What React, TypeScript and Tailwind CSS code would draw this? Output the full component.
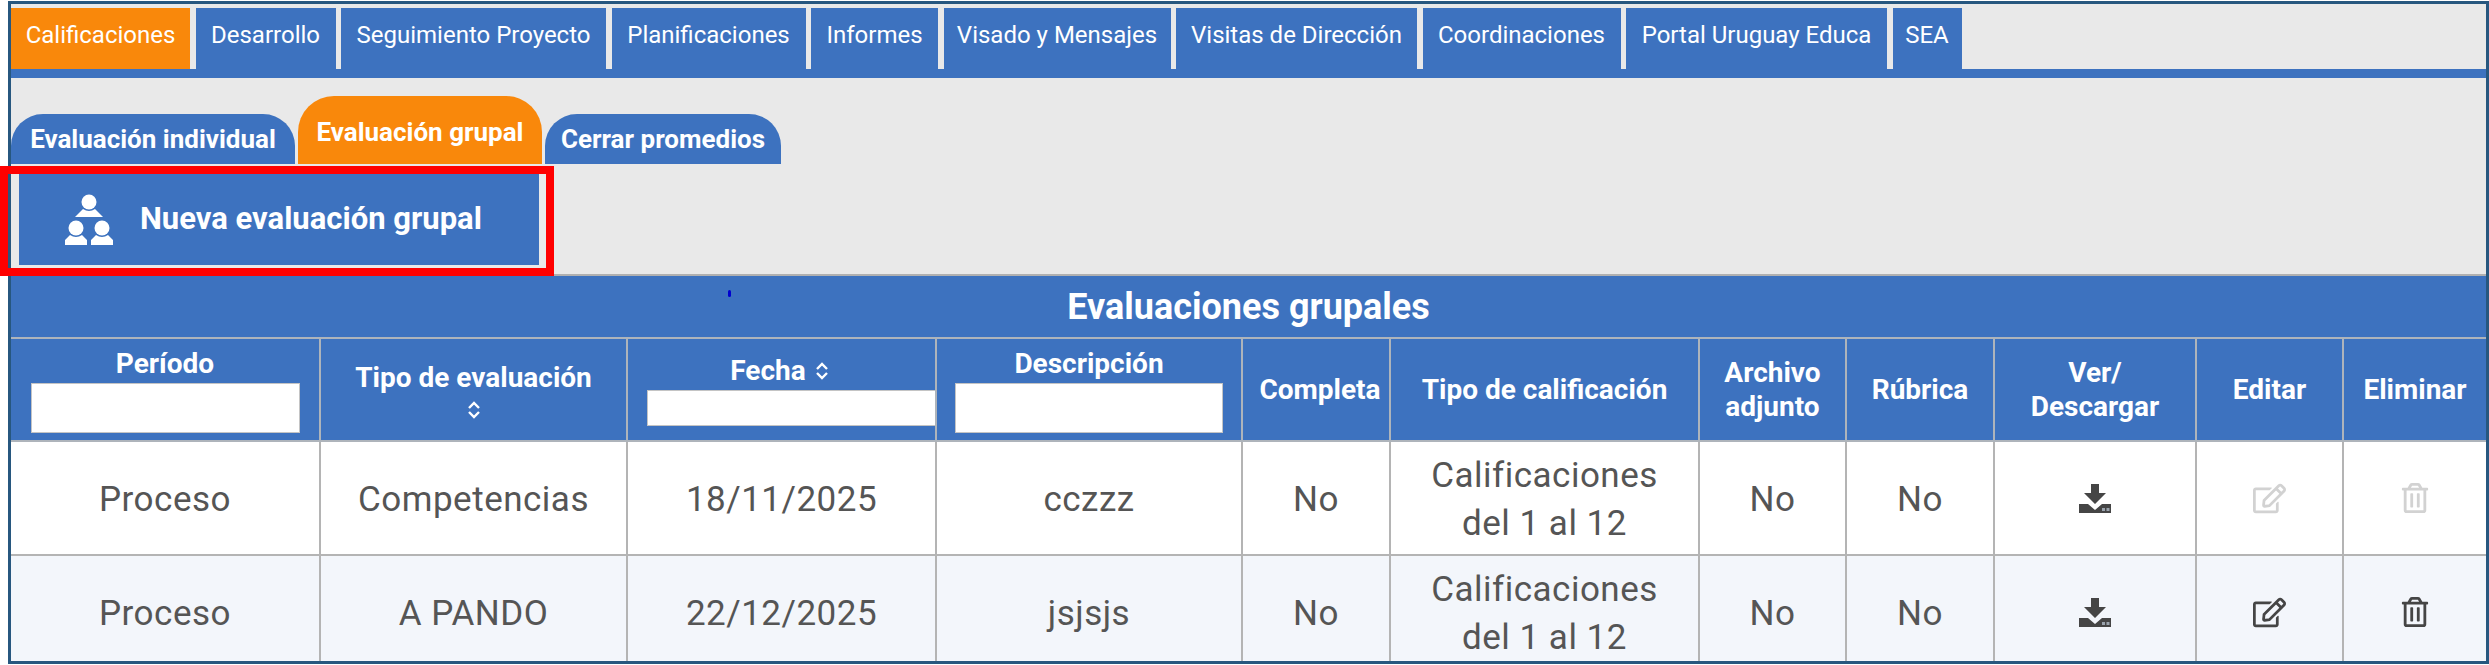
import { FaRegEdit, FaRegTrashAlt } from "react-icons/fa";

const navTabs = [
  { label: "Calificaciones", width: "w-[179px]", active: true },
  { label: "Desarrollo", width: "w-[140px]", active: false },
  { label: "Seguimiento Proyecto", width: "w-[265px]", active: false },
  { label: "Planificaciones", width: "w-[194px]", active: false },
  { label: "Informes", width: "w-[127px]", active: false },
  { label: "Visado y Mensajes", width: "w-[227px]", active: false },
  { label: "Visitas de Dirección", width: "w-[241px]", active: false },
  { label: "Coordinaciones", width: "w-[198px]", active: false },
  { label: "Portal Uruguay Educa", width: "w-[261px]", active: false },
  { label: "SEA", width: "w-[69px]", active: false },
];

const rows = [
  { periodo: "Proceso", tipo: "Competencias", fecha: "18/11/2025", desc: "cczzz", disabled: true, bg: "bg-white" },
  { periodo: "Proceso", tipo: "A PANDO", fecha: "22/12/2025", desc: "jsjsjs", disabled: false, bg: "bg-[#f3f6fb]" },
];

const th = "border-2 border-[#aeb4bb] overflow-hidden p-0 font-bold text-[28px] leading-[34px] text-white text-center align-middle";
const td = "border-2 border-[#b4b4b4] p-0 text-center align-middle";
const cellText = "pt-[3px] text-[35px] leading-[48px] font-normal tracking-[0.5px] text-[#555555]";

function SortIcon() {
  return (
    <svg width="14" height="18" viewBox="0 0 14 18" fill="none" stroke="white" strokeWidth="2.4">
      <path d="M2 7 L7 2 L12 7" />
      <path d="M2 11 L7 16 L12 11" />
    </svg>
  );
}

function GroupIcon() {
  return (
    <svg width="48" height="51" viewBox="0 0 48 51" fill="white">
      <circle cx="24" cy="8" r="7.5" />
      <path d="M18 15 Q24 19 30 15 L38 23 L10 23 Z" />
      <circle cx="11" cy="34" r="7.5" />
      <path d="M5 41 Q11 45 17 41 L22 46 L22 51 L0 51 L0 46 Z" />
      <circle cx="37" cy="34" r="7.5" />
      <path d="M31 41 Q37 45 43 41 L48 46 L48 51 L26 51 L26 46 Z" />
    </svg>
  );
}

function DownloadIcon() {
  return (
    <svg width="32" height="29" viewBox="0 0 32 29" className="mx-auto block">
      <path fill="#454545" d="M12 0 H20 V9 H27 L16 20 L5 9 H12 Z" />
      <path fill="#454545" d="M0 20 H9 L16 26 L23 20 H32 V29 H0 Z" />
      <rect x="23" y="24" width="3" height="3" fill="#9aa3ad" />
      <rect x="27.5" y="24" width="3" height="3" fill="#9aa3ad" />
    </svg>
  );
}

export default function App() {
  return (
    <div className="relative h-[665px] w-[2489px] bg-white pt-px pl-2 [font-family:Roboto,sans-serif]">
      <div className="w-[2481px] h-[663px] border-[3px] border-[#27577f] bg-[#e9e9e9] overflow-hidden">
        {/* Main navigation */}
        <div className="pt-1">
          <div className="flex gap-[5.5px] h-[61px]">
            {navTabs.map((tab) => (
              <div
                key={tab.label}
                className={`${tab.width} shrink-0 flex items-center justify-center pb-[7px] text-[24px] text-white ${
                  tab.active ? "bg-[#f9880b]" : "bg-[#3d72bf]"
                }`}
              >
                {tab.label}
              </div>
            ))}
          </div>
          <div className="h-[9px] bg-[#3d72bf]" />
        </div>

        {/* Sub tabs and action */}
        <div className="h-[198px] border-b-2 border-[#b0b0b0] pt-[18px]">
          <div className="flex items-end gap-[3px] h-[68px]">
            <div className="w-[284px] h-[50px] rounded-t-[32px] bg-[#3d72bf] flex items-center justify-center text-[26px] font-bold text-white">
              Evaluación individual
            </div>
            <div className="w-[244px] h-[68px] rounded-t-[36px] bg-[#f9880b] flex items-start justify-center pt-[17px] text-[26px] font-bold text-white">
              Evaluación grupal
            </div>
            <div className="w-[236px] h-[50px] rounded-t-[32px] bg-[#3d72bf] flex items-center justify-center text-[26px] font-bold text-white">
              Cerrar promedios
            </div>
          </div>
          <div className="ml-2 mt-[9px] w-[520px] h-[92px] bg-[#3d72bf] flex items-center gap-[27px] pl-[46px] text-[31px] font-bold text-white">
            <GroupIcon />
            <span>Nueva evaluación grupal</span>
          </div>
        </div>

        {/* Table */}
        <div className="h-[61px] bg-[#3d72bf] flex items-center justify-center text-[36px] font-bold text-white">
          Evaluaciones grupales
        </div>
        <table className="table-fixed border-collapse w-[2475px]">
          <colgroup>
            <col className="w-[309px]" />
            <col className="w-[307px]" />
            <col className="w-[309px]" />
            <col className="w-[306px]" />
            <col className="w-[148px]" />
            <col className="w-[309px]" />
            <col className="w-[147px]" />
            <col className="w-[148px]" />
            <col className="w-[202px]" />
            <col className="w-[147px]" />
            <col className="w-[143px]" />
          </colgroup>
          <thead>
            <tr className="h-[103px] bg-[#3d72bf]">
              <th className={`${th} border-l-0`}>
                <div className="flex flex-col items-center gap-[2px]">
                  <span>Período</span>
                  <input className="w-[269px] h-[50px] bg-white border border-[#c4c4c4]" />
                </div>
              </th>
              <th className={th}>
                <div className="flex flex-col items-center gap-[6px]">
                  <span>Tipo de evaluación</span>
                  <SortIcon />
                </div>
              </th>
              <th className={th}>
                <div className="flex flex-col">
                  <span className="flex items-center justify-center gap-[9px] pr-[4px]">
                    Fecha <SortIcon />
                  </span>
                  <input className="ml-[19px] mt-[2px] w-[300px] h-[36px] bg-white border border-[#c4c4c4]" />
                </div>
              </th>
              <th className={th}>
                <div className="flex flex-col items-center gap-[2px]">
                  <span>Descripción</span>
                  <input className="w-[268px] h-[50px] bg-white border border-[#c4c4c4]" />
                </div>
              </th>
              <th className={`${th} pl-[8px]`}>Completa</th>
              <th className={th}>Tipo de calificación</th>
              <th className={th}>
                Archivo
                <br />
                adjunto
              </th>
              <th className={th}>Rúbrica</th>
              <th className={th}>
                Ver/
                <br />
                Descargar
              </th>
              <th className={th}>Editar</th>
              <th className={`${th} border-r-0`}>Eliminar</th>
            </tr>
          </thead>
          <tbody>
            {rows.map((row) => (
              <tr key={row.desc} className={`h-[114px] ${row.bg}`}>
                <td className={`${td} ${cellText} border-l-0`}>{row.periodo}</td>
                <td className={`${td} ${cellText}`}>{row.tipo}</td>
                <td className={`${td} ${cellText}`}>{row.fecha}</td>
                <td className={`${td} ${cellText}`}>{row.desc}</td>
                <td className={`${td} ${cellText}`}>No</td>
                <td className={`${td} ${cellText}`}>
                  Calificaciones
                  <br />
                  del 1 al 12
                </td>
                <td className={`${td} ${cellText}`}>No</td>
                <td className={`${td} ${cellText}`}>No</td>
                <td className={td}>
                  <DownloadIcon />
                </td>
                <td className={td}>
                  <FaRegEdit
                    size={33}
                    className={`mx-auto ${row.disabled ? "text-[#d2d2d2]" : "text-[#454545]"}`}
                  />
                </td>
                <td className={`${td} border-r-0`}>
                  <FaRegTrashAlt
                    size={30}
                    className={`mx-auto ${row.disabled ? "text-[#d2d2d2]" : "text-[#454545]"}`}
                  />
                </td>
              </tr>
            ))}
          </tbody>
        </table>
      </div>

      {/* Red highlight annotation */}
      <div className="absolute left-0 top-[166px] w-[554px] h-[110px] border-[8px] border-[#ff0000]" />
      {/* Stray blue mark */}
      <div className="absolute left-[728px] top-[290px] w-[3px] h-[7px] rounded-full bg-[#0000d0]" />
    </div>
  );
}
